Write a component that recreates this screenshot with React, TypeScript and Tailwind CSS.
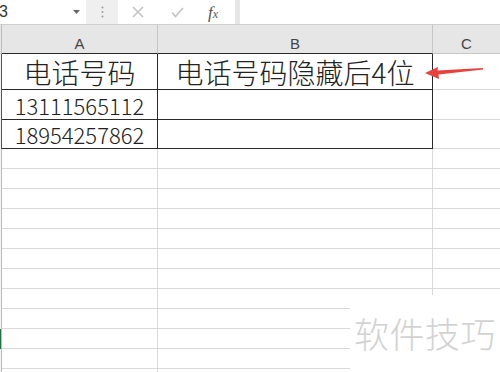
import React from "react";

function GridRow({
  h,
  dark,
  green,
  a,
  b,
}: {
  h: string;
  dark?: boolean;
  green?: boolean;
  a?: React.ReactNode;
  b?: React.ReactNode;
}) {
  const abB = dark ? "border-[#2a2a2a]" : "border-[#d9d9d9]";
  return (
    <div className={`flex shrink-0 ${h}`}>
      <div
        className={`w-[2px] shrink-0 border-r ${
          dark ? "border-[#555]" : "border-[#bdbdbd]"
        } ${green ? "bg-[#217346]" : "bg-[#f3f3f3]"}`}
      />
      <div
        className={`flex w-[156px] shrink-0 items-end justify-center border-b border-r ${abB}`}
      >
        {a}
      </div>
      <div
        className={`flex w-[275px] shrink-0 items-end justify-center border-b border-r ${abB}`}
      >
        {b}
      </div>
      <div className="flex-1 border-b border-[#d9d9d9]" />
    </div>
  );
}

export default function App() {
  const rest = Array.from({ length: 12 }, (_, i) => i);
  return (
    <div className="relative h-[372px] w-[500px] overflow-hidden bg-white font-['Noto_Sans_CJK_SC',sans-serif] text-[#222]">
      {/* toolbar */}
      <div className="flex h-[25px] border-b border-[#cfcfcf] bg-[#efefef]">
        <div className="flex w-[86px] items-center justify-between bg-white pr-[6px]">
          <span className="ml-[-1px] font-['Liberation_Sans',sans-serif] text-[16px] leading-none text-[#333]">
            3
          </span>
          <svg width="7" height="5" viewBox="0 0 7 5">
            <polygon points="0,0 7,0 3.5,4" fill="#666" />
          </svg>
        </div>
        <div className="flex w-[32px] items-center justify-center bg-[#efefef]">
          <svg width="3" height="12" viewBox="0 0 3 12">
            <circle cx="1.5" cy="1.5" r="1" fill="#999" />
            <circle cx="1.5" cy="6" r="1" fill="#999" />
            <circle cx="1.5" cy="10.5" r="1" fill="#999" />
          </svg>
        </div>
        <div className="flex w-[117px] items-center bg-white">
          <svg className="ml-[14px]" width="12" height="12" viewBox="0 0 12 12">
            <path d="M1 1 L11 11 M11 1 L1 11" stroke="#c4c4c4" strokeWidth="1.6" fill="none" />
          </svg>
          <svg className="ml-[27px]" width="13" height="11" viewBox="0 0 13 11">
            <path d="M1 5.5 L4.5 9.5 L12 1" stroke="#c4c4c4" strokeWidth="1.6" fill="none" />
          </svg>
          <span className="ml-[24px] font-['Liberation_Serif',serif] text-[17px] italic leading-none text-[#555]">
            f<span className="text-[12px]">x</span>
          </span>
        </div>
        <div className="w-[5px] bg-[#e6e6e6]" />
        <div className="flex-1 bg-white" />
      </div>

      {/* column header */}
      <div className="flex h-[29px] bg-[#e6e6e6] font-['Liberation_Sans',sans-serif] text-[15px] leading-none text-[#444]">
        <div className="w-[2px] shrink-0 border-r border-b border-[#bdbdbd]" />
        <div className="flex w-[156px] shrink-0 items-end justify-center border-r border-b border-r-[#c6c6c6] border-b-[#2a2a2a] pb-[2px]">
          A
        </div>
        <div className="flex w-[275px] shrink-0 items-end justify-center border-r border-b border-r-[#c6c6c6] border-b-[#2a2a2a] pb-[2px]">
          B
        </div>
        <div className="flex flex-1 items-end justify-center border-b border-[#c6c6c6] pb-[2px]">
          C
        </div>
      </div>

      {/* data */}
      <GridRow
        h="h-[36px]"
        dark
        a={<span className="pb-[3px] text-[28px] font-light leading-[28px]">电话号码</span>}
        b={<span className="pb-[3px] text-[28px] font-light leading-[28px]">电话号码隐藏后4位</span>}
      />
      <GridRow
        h="h-[30px]"
        dark
        a={<span className="pb-[3px] text-[22px] font-light leading-[22px]">13111565112</span>}
      />
      <GridRow
        h="h-[29px]"
        dark
        a={<span className="pb-[3px] text-[22px] font-light leading-[22px]">18954257862</span>}
      />
      {rest.map((i) => (
        <GridRow key={i} h="h-[20px]" green={i === 9} />
      ))}

      {/* red arrow annotation */}
      <svg className="absolute left-[424px] top-[63px]" width="62" height="18" viewBox="0 0 62 18">
        <polygon
          points="1,10 14,4 13.5,7.5 59,5 59,6.5 14.5,11.5 15,16"
          fill="#e8413b"
        />
      </svg>

      {/* watermark */}
      <div className="absolute left-[350px] top-[295px] right-0 bottom-0 bg-white">
        <span className="absolute left-[4px] top-[20px] text-[35px] font-light leading-none tracking-[0.5px] text-[#d2d2d2]">
          软件技巧
        </span>
      </div>
    </div>
  );
}
